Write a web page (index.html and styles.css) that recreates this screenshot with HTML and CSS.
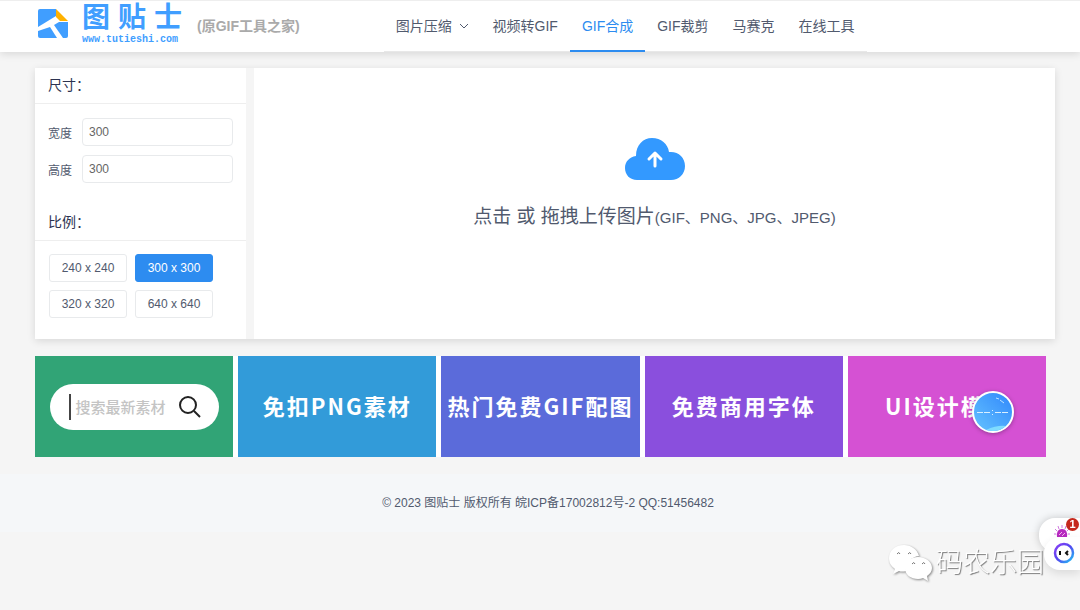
FILE: index.html
```
<!DOCTYPE html>
<html lang="zh-CN">
<head>
    <meta charset="UTF-8">
    <meta name="viewport" content="width=device-width, initial-scale=1.0">
    <title>GIF合成 - 图贴士</title>
    <link rel="stylesheet" href="styles.css">
</head>
<body>
    <header class="header">
        <a class="logo" href="#">
            <svg class="logo-mark" viewBox="0 0 30 30" aria-hidden="true">
                <path d="M2 0H18V7L0 18V2Q0 0 2 0Z" fill="#409eff"/>
                <path d="M18 0L30 12H22L18 8Z" fill="#ffb100"/>
                <path d="M21 13H30V27Q30 29 28 29H25L16 16Z" fill="#409eff"/>
                <path d="M0 22L12 18L19 29H2Q0 29 0 27Z" fill="#409eff"/>
            </svg>
            <span class="logo-text">
                <span class="logo-name">图贴士</span>
                <span class="logo-url">www.tutieshi.com</span>
            </span>
        </a>
        <span class="old-name">(原GIF工具之家)</span>
        <nav class="nav">
            <a href="#">图片压缩
                <svg class="arrow" viewBox="0 0 10 10" aria-hidden="true"><path d="M1 3L5 7L9 3"/></svg>
            </a>
            <a href="#">视频转GIF</a>
            <a class="active" href="#">GIF合成</a>
            <a href="#">GIF裁剪</a>
            <a href="#">马赛克</a>
            <a href="#">在线工具</a>
        </nav>
    </header>

    <main class="container">
        <section class="workspace">
            <aside class="sidebar">
                <h2>尺寸：</h2>
                <div class="size-form">
                    <div class="input-group">
                        <label for="width">宽度</label>
                        <input type="text" id="width" value="300">
                    </div>
                    <div class="input-group">
                        <label for="height">高度</label>
                        <input type="text" id="height" value="300">
                    </div>
                </div>
                <h2>比例：</h2>
                <div class="ratios">
                    <button class="btn" type="button">240 x 240</button>
                    <button class="btn btn-primary" type="button">300 x 300</button>
                    <button class="btn" type="button">320 x 320</button>
                    <button class="btn" type="button">640 x 640</button>
                </div>
            </aside>
            <button class="upload" type="button">
                <svg class="cloud" viewBox="0 0 60 44" aria-hidden="true">
                    <path d="M12 43C5 43 0 38 0 31C0 25 4 20 11 19C11 8 18 1 27 1C36 1 43 7 44 15C53 14 60 20 60 29C60 37 54 43 46 43Z" fill="#3399ff"/>
                    <path d="M30 29V16M24 22L30 16L36 22" fill="none" stroke="#fff" stroke-width="3" stroke-linecap="round" stroke-linejoin="round"/>
                </svg>
                <span class="upload-text">点击 或 拖拽上传图片<small>(GIF、PNG、JPG、JPEG)</small></span>
            </button>
        </section>

        <section class="banners">
            <a class="banner green" href="#">
                <span class="search">
                    <span class="search-text">搜索最新素材</span>
                    <svg class="search-icon" viewBox="0 0 22 22" aria-hidden="true"><circle cx="9" cy="9" r="8"/><path d="M15 15L21 21"/></svg>
                </span>
            </a>
            <a class="banner blue" href="#">免扣PNG素材</a>
            <a class="banner indigo" href="#">热门免费GIF配图</a>
            <a class="banner purple" href="#">免费商用字体</a>
            <a class="banner pink" href="#">UI设计模板
                <span class="clock">
                    <svg viewBox="0 0 44 44" aria-hidden="true">
                        <defs>
                            <linearGradient id="sky" x1="0" y1="1" x2="1" y2="0">
                                <stop offset="0" stop-color="#66c4ff"/>
                                <stop offset="1" stop-color="#2f86fb"/>
                            </linearGradient>
                        </defs>
                        <circle cx="22" cy="22" r="20" fill="url(#sky)" stroke="#fff" stroke-width="2"/>
                        <path d="M15 40Q26 35 35 36Q29 41 22 41Q18 41 15 40Z" fill="#7fdcff"/>
                        <path d="M25 8L28 9M29 10L33 13" stroke="#bfe3ff" fill="none"/>
                        <path d="M6 22.500H12M13 22.500H19M24 22.500H30M31 22.500H37" stroke="#d9f0ff" fill="none"/>
                        <path d="M21 20.500H22M21 24.500H22" stroke="#d9f0ff" fill="none"/>
                    </svg>
                </span>
            </a>
        </section>
    </main>

    <footer class="footer">© 2023 图贴士 版权所有 皖ICP备17002812号-2 QQ:51456482</footer>

    <div class="watermark">
        <svg viewBox="0 0 44 38" aria-hidden="true">
            <path d="M16 1C7 1 1 7 1 14C1 19 3 22 7 25L5 30L11 27Q14 28 18 27C17 19 23 13 31 12C29 5 23 1 16 1Z"/>
            <path d="M30 13C22 13 17 18 17 24C17 31 23 35 30 35Q33 35 35 34L40 37L39 32C42 30 44 27 44 24C44 18 38 13 30 13Z"/>
            <path class="eyes" d="M9 10Q11 7 12 10M20 10Q22 7 23 10M24 20Q26 17 27 20M34 20Q36 17 37 20"/>
        </svg>
        <span>码农乐园</span>
    </div>

    <div class="assistant">
        <div class="assistant-top">
            <svg viewBox="0 0 16 14" aria-hidden="true">
                <path d="M3 12Q2 4 8 4Q14 4 13 12Q8 14 3 12Z" fill="#b62ac0"/>
                <path d="M5 10L8 7M8 11L11 8" stroke="#f3b6e8"/>
                <path d="M8 0V3M4 1L5 4M12 1L11 4M1 4L3 6M15 4L13 6M0 9H2M14 9H16" stroke="#d07be0" fill="none"/>
            </svg>
            <span class="badge">1</span>
        </div>
        <div class="assistant-bottom">
            <svg viewBox="0 0 22 22" aria-hidden="true">
                <defs>
                    <linearGradient id="ring" x1="0" y1="0" x2="1" y2="1">
                        <stop offset="0" stop-color="#8a3ff5"/>
                        <stop offset=".5" stop-color="#5347f0"/>
                        <stop offset="1" stop-color="#20c5f5"/>
                    </linearGradient>
                </defs>
                <circle cx="11" cy="11" r="9" fill="#fff" stroke="url(#ring)" stroke-width="2.500"/>
                <path d="M7 9V13M15 9L13 11L15 13" stroke="#111" stroke-width="2" fill="none"/>
            </svg>
        </div>
    </div>
</body>
</html>
```
FILE: styles.css
```
* {
    box-sizing: border-box;
}

body {
    margin: 0;
    background-color: #f5f5f5;
    color: #515a6e;
    font-family: "Liberation Sans", "Noto Sans CJK SC", sans-serif;
    font-size: 12px;
}

a {
    color: inherit;
    text-decoration: none;
}

.header {
    display: flex;
    height: 52px;
    padding-left: 38px;
    background-color: #fff;
    border-top: 1px solid #eee;
    box-shadow: 0 2px 8px rgba(0, 0, 0, 0.12);
}

.logo {
    display: flex;
    gap: 14px;
    color: #409eff;
}

.logo-mark {
    width: 30px;
    height: 30px;
    margin-top: 8px;
}

.logo-text {
    display: flex;
    flex-direction: column;
    width: 104px;
    padding-top: 1px;
}

.logo-name {
    font-size: 28px;
    font-weight: bold;
    line-height: 32px;
    letter-spacing: 8px;
    white-space: nowrap;
}

.logo-url {
    font-family: "Liberation Mono", monospace;
    font-size: 10px;
    font-weight: bold;
    line-height: 12px;
}

.old-name {
    margin-left: 11px;
    color: #aaa;
    font-size: 14px;
    font-weight: bold;
    line-height: 50px;
}

.nav {
    display: flex;
    height: 51px;
    margin-left: 84px;
    border-bottom: 1px solid #e8e8e8;
    font-size: 14px;
    line-height: 50px;
}

.nav a {
    height: 51px;
    padding: 0 12px;
    white-space: nowrap;
}

.nav .active {
    color: #2d8cf0;
    border-bottom: 2px solid #2d8cf0;
}

.arrow {
    width: 10px;
    height: 10px;
    margin-left: 3px;
    fill: none;
    stroke: #515a6e;
}

.container {
    padding: 16px 25px 0 35px;
}

.workspace {
    display: flex;
    gap: 8px;
    box-shadow: 0 2px 8px rgba(0, 0, 0, 0.12);
    background-color: #f5f5f5;
}

.sidebar {
    width: 211px;
    padding-bottom: 21px;
    background-color: #fff;
}

.sidebar h2 {
    margin: 0;
    padding: 0 13px;
    border-bottom: 1px solid #eee;
    color: #2c3350;
    font-size: 14px;
    font-weight: normal;
    line-height: 35px;
}

.size-form {
    display: grid;
    gap: 9px;
    padding: 14px 13px 22px;
}

.input-group {
    display: flex;
    align-items: center;
    gap: 10px;
}

.input-group input {
    flex: 1;
    width: 0;
    height: 28px;
    padding: 0 6px;
    border: 1px solid #e8eaec;
    border-radius: 4px;
    color: #666;
    font-family: inherit;
    font-size: 12px;
}

.ratios {
    display: grid;
    grid-template-columns: 78px 78px;
    gap: 8px;
    padding: 13px 14px 0;
}

.btn {
    height: 28px;
    padding: 0;
    border: 1px solid #e8eaec;
    border-radius: 3px;
    background-color: #fff;
    color: #515a6e;
    font-family: inherit;
    font-size: 12px;
}

.btn-primary {
    border-color: #2d8cf0;
    background-color: #2d8cf0;
    color: #fff;
}

.upload {
    flex: 1;
    display: flex;
    flex-direction: column;
    align-items: center;
    justify-content: center;
    gap: 20px;
    padding: 0 0 36px;
    border: 0;
    background-color: #fff;
    color: #515a6e;
    font-family: inherit;
}

.cloud {
    width: 60px;
    height: 44px;
}

.upload-text {
    font-size: 19px;
    line-height: 32px;
}

.upload-text small {
    font-size: 15px;
}

.banners {
    display: grid;
    grid-template-columns: repeat(5, 1fr);
    gap: 5px;
    margin: 17px 9px 0 0;
    background-color: #fff;
}

.banner {
    position: relative;
    display: flex;
    align-items: center;
    justify-content: center;
    height: 101px;
    padding-bottom: 4px;
    color: #fff;
    font-family: "Noto Sans CJK SC", sans-serif;
    font-size: 22px;
    font-weight: bold;
    letter-spacing: 2px;
    white-space: nowrap;
}

.green {
    padding-bottom: 0;
    background-color: #31a476;
}

.blue {
    background-color: #329bd9;
}

.indigo {
    background-color: #5b6bda;
}

.purple {
    background-color: #8a4fdd;
}

.pink {
    background-color: #d551d3;
}

.search {
    display: flex;
    align-items: center;
    gap: 13px;
    height: 46px;
    padding: 0 18px 0 19px;
    border-radius: 23px;
    background-color: #fff;
}

.search-text {
    padding-left: 5px;
    border-left: 2px solid #444;
    color: #c4c4c4;
    font-size: 15px;
    font-weight: 500;
    letter-spacing: 0;
    line-height: 26px;
}

.search-icon {
    width: 22px;
    height: 22px;
    fill: none;
    stroke: #222;
    stroke-width: 2;
}

.clock {
    position: absolute;
    top: 34px;
    right: 31px;
    width: 44px;
    height: 44px;
}

.clock svg {
    display: block;
    filter: drop-shadow(0 1px 2px rgba(0, 0, 0, 0.3));
}

.footer {
    margin-top: 17px;
    padding: 20px 0 20px 16px;
    background-color: #f5f7f9;
    line-height: 18px;
    text-align: center;
}

.watermark {
    position: fixed;
    right: 36px;
    bottom: 28px;
    display: flex;
    align-items: center;
    gap: 4px;
    color: #fff;
    font-size: 27px;
    font-weight: 300;
    line-height: 38px;
    text-shadow: 1px 1px 1px #777;
}

.watermark svg {
    width: 44px;
    height: 38px;
    fill: #fff;
    filter: drop-shadow(1px 1px 1px #888);
}

.watermark .eyes {
    fill: none;
    stroke: #777;
}

.assistant {
    position: fixed;
    right: 0;
    bottom: 40px;
    width: 41px;
    height: 52px;
}

.assistant-top,
.assistant-bottom {
    position: absolute;
    right: 0;
    border-radius: 16px 0 0 16px;
    background-color: #fff;
    box-shadow: 0 0 8px rgba(0, 0, 0, 0.2);
}

.assistant-top {
    top: 0;
    width: 41px;
    height: 34px;
}

.assistant-top svg {
    width: 16px;
    height: 14px;
    margin: 7px 0 0 15px;
}

.assistant-bottom {
    bottom: 0;
    width: 36px;
    height: 33px;
    box-shadow: 0 4px 8px rgba(0, 0, 0, 0.1);
}

.assistant-bottom svg {
    width: 22px;
    height: 22px;
    margin: 5px 0 0 9px;
}

.badge {
    position: absolute;
    top: 0;
    right: 1px;
    width: 13px;
    height: 13px;
    border-radius: 50%;
    background-color: #c5281c;
    color: #fff;
    font-size: 11px;
    font-weight: bold;
    line-height: 13px;
    text-align: center;
}
```
